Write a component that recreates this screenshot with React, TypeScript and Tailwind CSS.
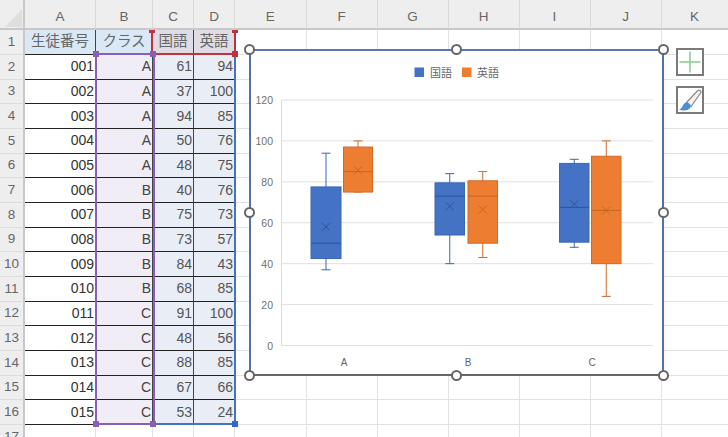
import React from "react";

const cols = ["A", "B", "C", "D", "E", "F", "G", "H", "I", "J", "K"];
const data: [string, string, number, number][] = [
  ["001", "A", 61, 94], ["002", "A", 37, 100], ["003", "A", 94, 85], ["004", "A", 50, 76], ["005", "A", 48, 75],
  ["006", "B", 40, 76], ["007", "B", 75, 73], ["008", "B", 73, 57], ["009", "B", 84, 43], ["010", "B", 68, 85],
  ["011", "C", 91, 100], ["012", "C", 48, 56], ["013", "C", 88, 85], ["014", "C", 67, 66], ["015", "C", 53, 24],
];
const head = ["生徒番号", "クラス", "国語", "英語"];
const cjk = { fontFamily: '"Liberation Sans", "Noto Sans CJK JP", sans-serif' };

type Box = { l: number; r: number; q3: number; q1: number; med: number; mean: number; max: number; min: number; c: "b" | "o" };
const boxes: Box[] = [
  { l: 311, r: 341, q3: 77.5, q1: 42.5, med: 50, mean: 58, max: 94, min: 37, c: "b" },
  { l: 343.5, r: 372.5, q3: 97, q1: 75, med: 85, mean: 85.6, max: 100, min: 75, c: "o" },
  { l: 435, r: 464.5, q3: 79.5, q1: 54, med: 73, mean: 68, max: 84, min: 40, c: "b" },
  { l: 468, r: 497.5, q3: 80.5, q1: 50, med: 73, mean: 66.4, max: 85, min: 43, c: "o" },
  { l: 559.5, r: 589, q3: 89, q1: 50.5, med: 67.5, mean: 69, max: 91, min: 48, c: "b" },
  { l: 591.5, r: 621, q3: 92.5, q1: 40, med: 66, mean: 66, max: 100, min: 24, c: "o" },
];
const Y = (v: number) => 345.5 - 2.046 * v;

function Chart() {
  return (
    <svg viewBox="249 49 415 327" className="h-full w-full" style={cjk}>
      {[20, 40, 60, 80, 100, 120].map((v) => (
        <line key={v} x1={281.5} x2={653} y1={Y(v)} y2={Y(v)} stroke="#e0e0e0" strokeWidth={1} />
      ))}
      <line x1={281.5} x2={653} y1={345.5} y2={345.5} stroke="#e0e0e0" />
      <line x1={281.5} x2={281.5} y1={100} y2={345.5} stroke="#dcdcdc" />
      {[0, 20, 40, 60, 80, 100, 120].map((v) => (
        <text key={v} x={273} y={Y(v) + 4} textAnchor="end" fontSize={10.5} fill="#707070">{v}</text>
      ))}
      {[["A", 344], ["B", 468], ["C", 592]].map(([t, x]) => (
        <text key={t} x={x} y={366} textAnchor="middle" fontSize={10} fill="#666">{t}</text>
      ))}
      <rect x={414.5} y={67.5} width={9.5} height={9.5} fill="#4472c4" />
      <text x={430} y={77} fontSize={11} fill="#666">国語</text>
      <rect x={462} y={67.5} width={9.5} height={9.5} fill="#ed7d31" />
      <text x={477} y={77} fontSize={11} fill="#666">英語</text>
      {boxes.map((b, i) => {
        const fill = b.c === "b" ? "#4472c4" : "#ed7d31";
        const edge = b.c === "b" ? "#3c66b2" : "#d2682a";
        const mark = b.c === "b" ? "#2f5597" : "#c9651f";
        const cx = (b.l + b.r) / 2;
        const my = Y(b.mean);
        return (
          <g key={i}>
            <line x1={cx} x2={cx} y1={Y(b.max)} y2={Y(b.min)} stroke={edge} />
            <line x1={cx - 4.5} x2={cx + 4.5} y1={Y(b.max)} y2={Y(b.max)} stroke={edge} />
            <line x1={cx - 4.5} x2={cx + 4.5} y1={Y(b.min)} y2={Y(b.min)} stroke={edge} />
            <rect x={b.l} y={Y(b.q3)} width={b.r - b.l} height={Y(b.q1) - Y(b.q3)} fill={fill} stroke={edge} />
            <line x1={b.l} x2={b.r} y1={Y(b.med)} y2={Y(b.med)} stroke={mark} />
            <path d={`M${cx - 4} ${my - 4}L${cx + 4} ${my + 4}M${cx + 4} ${my - 4}L${cx - 4} ${my + 4}`} stroke={mark} fill="none" />
          </g>
        );
      })}
    </svg>
  );
}

function Handle() {
  return <div className="h-[11px] w-[11px] rounded-full border-2 border-[#666] bg-white" />;
}

function Sq({ x, y, c }: { x: number; y: number; c: string }) {
  return <div className={`absolute h-[6px] w-[6px] -translate-x-1/2 -translate-y-1/2 ${c}`} style={{ left: x, top: y }} />;
}

export default function App() {
  return (
    <div className="relative h-[437px] w-[728px] overflow-hidden bg-white" style={cjk}>
      <div className="grid h-[437px] grid-cols-[25px_71px_57px_41px_41px_71.5px_71px_71px_71px_71px_71px_67px] grid-rows-[30px_25px_repeat(16,24.67px)]">
        <div className="relative border-r-2 border-b-2 border-[#c8c8c8] bg-[#eeeeee]">
          <svg className="absolute left-[5px] top-[9px]" width="17" height="18"><path d="M17 0V18H0Z" fill="#dedede" /></svg>
        </div>
        {cols.map((c) => (
          <div key={c} className="flex items-center justify-center border-r border-b-2 border-r-[#d8d8d8] border-b-[#c8c8c8] bg-[#eeeeee] pt-[6px] text-[13.5px] text-[#666]">{c}</div>
        ))}
        {Array.from({ length: 17 }, (_, i) => i).map((r) => (
          <React.Fragment key={r}>
            <div className="flex items-center justify-center border-r-2 border-b border-r-[#c8c8c8] border-b-[#dcdcdc] bg-[#eeeeee] text-[13.5px] text-[#666]">{r + 1}</div>
            {cols.map((c, ci) => {
              if (r === 0 && ci < 4) {
                return (
                  <div key={c} className={`flex items-center justify-center border-r border-b border-b-[#222] border-r-[#444] text-[14.5px] text-[#666] ${ci < 2 ? "bg-[#d9e8f4]" : "bg-[#e0dce6]"}`}>{head[ci]}</div>
                );
              }
              if (r >= 1 && r <= 15 && ci < 4) {
                const val = data[r - 1][ci];
                return (
                  <div key={c} className={`flex items-center justify-end border-r border-b border-b-[#222] border-r-[#444] pr-[1px] text-[14px] ${ci === 0 ? "bg-white text-[#333]" : ci === 1 ? "bg-[#f1edf7] text-[#444]" : "bg-[#e9edf6] text-[#555]"}`}>{val}</div>
                );
              }
              return <div key={c} className="border-r border-b border-[#e2e2e2] bg-white" />;
            })}
          </React.Fragment>
        ))}
      </div>

      {/* range selection outlines */}
      <div className="absolute left-[95px] top-[53px] h-[372px] w-[60px] border-2 border-[#8a5fb8]" />
      <div className="absolute left-[154px] top-[423px] h-[2px] w-[81px] bg-[#4472c4]" />
      <div className="absolute left-[234px] top-[55px] h-[370px] w-[2px] bg-[#4472c4]" />
      <div className="absolute left-[151px] top-[30px] h-[25px] w-[85px] border-2 border-t-0 border-[#c0323c]" />
      <Sq x={96} y={54} c="bg-[#8a5fb8]" />
      <Sq x={153} y={54} c="bg-[#8a5fb8]" />
      <Sq x={96} y={424} c="bg-[#8a5fb8]" />
      <Sq x={153} y={424} c="bg-[#8a5fb8]" />
      <Sq x={235} y={424} c="bg-[#2f6ac8]" />
      <Sq x={235} y={54} c="bg-[#c0323c]" />
      <div className="absolute left-[149px] top-[30px] h-[3px] w-[6px] bg-[#c0323c]" />
      <div className="absolute left-[232px] top-[30px] h-[3px] w-[6px] bg-[#c0323c]" />

      {/* chart object, a floating window over the sheet */}
      <div className="absolute left-[249px] top-[49px] h-[327px] w-[415px] border-2 border-[#4f71b0] border-b-[#666] border-t-[#5a76ad] bg-white">
        <div className="absolute -inset-[2px]"><Chart /></div>
        <div className="absolute -inset-[7px] flex flex-col justify-between">
          <div className="flex justify-between"><Handle /><Handle /><Handle /></div>
          <div className="flex justify-between"><Handle /><Handle /></div>
          <div className="flex justify-between"><Handle /><Handle /><Handle /></div>
        </div>
      </div>

      {/* chart side buttons */}
      <div className="absolute left-[676px] top-[48px] flex flex-col gap-[10px]">
        <div className="flex h-[28px] w-[28px] items-center justify-center border-2 border-[#7a7a7a] bg-white">
          <svg width="22" height="22" viewBox="0 0 22 22">
            <path d="M11 0.5V21.5M0.5 11H21.5" stroke="#86cc98" strokeWidth="1.5" fill="none" />
          </svg>
        </div>
        <div className="flex h-[28px] w-[28px] items-center justify-center border-2 border-[#7a7a7a] bg-white">
          <svg width="24" height="24" viewBox="0 0 24 24">
            <path d="M8.5 14.5L19.5 2.8C21 1.5 23.5 2.5 22.8 4.8L13 18.5Z" fill="#f2f2f2" stroke="#8a8a8a" strokeWidth="1.2" />
            <path d="M1 21.5C4.5 20.5 4.5 17 6.5 15.2C8.5 13.8 11.5 14.8 12.8 17.8C12.5 20.5 10.5 22 8 22.3C5.5 22.7 3 22.4 1 21.5Z" fill="#4a90d9" />
          </svg>
        </div>
      </div>
    </div>
  );
}
